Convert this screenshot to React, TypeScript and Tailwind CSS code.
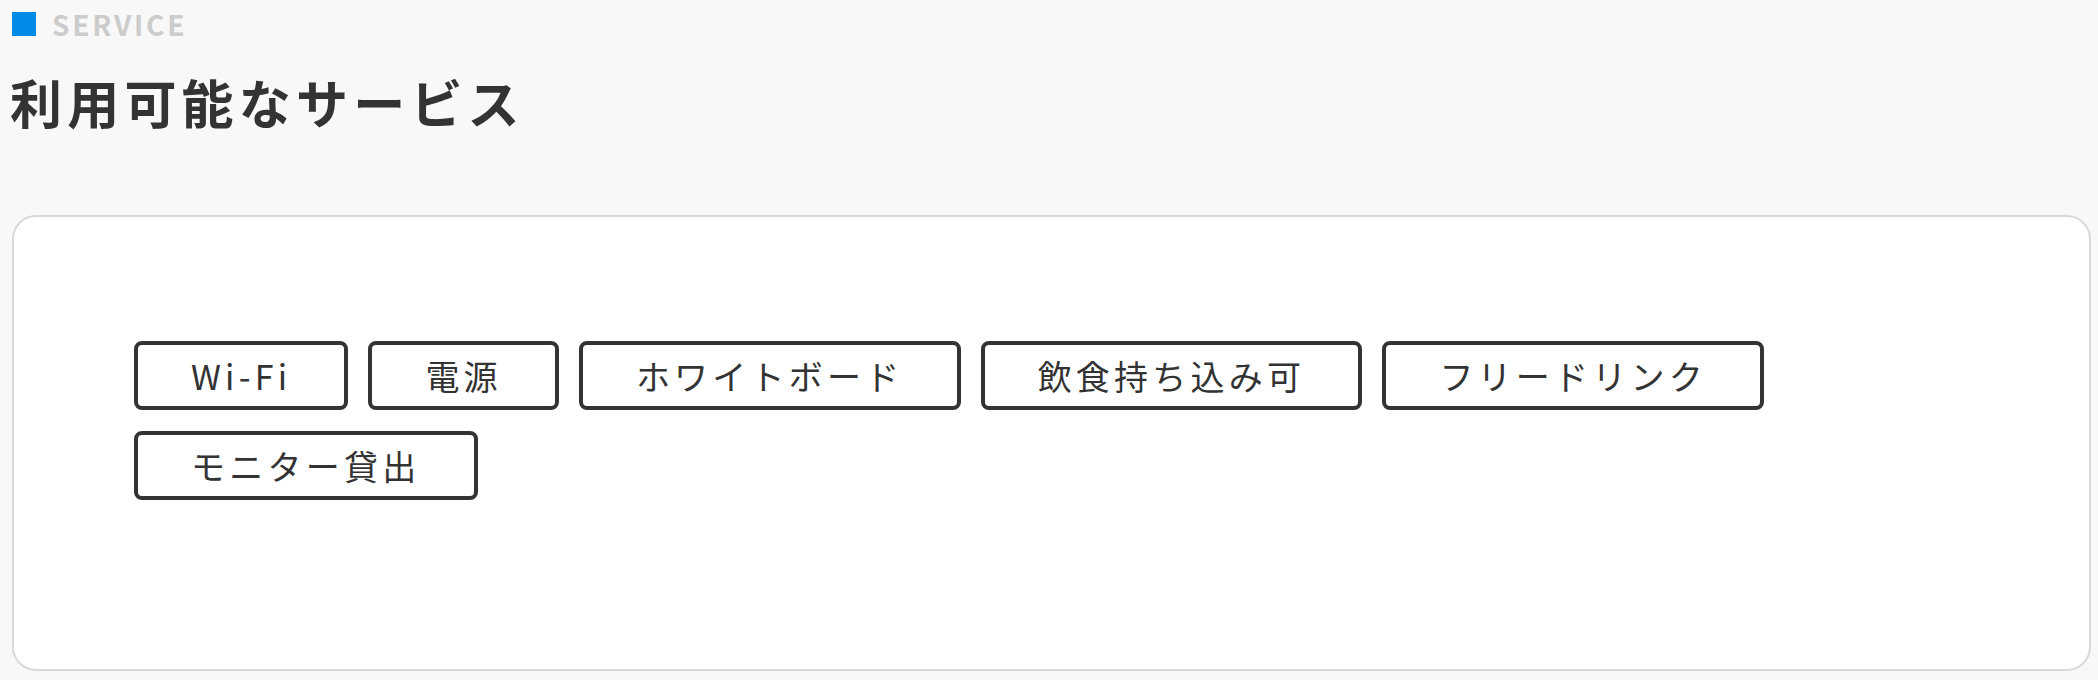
import React from "react";

const SERVICES = [
  "Wi-Fi",
  "電源",
  "ホワイトボード",
  "飲食持ち込み可",
  "フリードリンク",
  "モニター貸出",
];

export default function App() {
  return (
    <div
      className="min-h-screen bg-[#f8f8f8] pl-[12px] pr-[7px] pt-[12px] text-[#333]"
      style={{ fontFamily: '"Noto Sans CJK JP", "Noto Sans", sans-serif' }}
    >
      {/* Section label */}
      <div className="flex items-center gap-[16px]">
        <span className="block h-[24px] w-[24px] bg-[#008be8]" />
        <span className="text-[28px] font-bold leading-[24px] tracking-[0.1em] text-[#cccccc]">
          SERVICE
        </span>
      </div>

      <h2 className="-ml-[2px] mt-[36px] text-[52px] font-bold leading-[60px] tracking-[0.1em]">
        利用可能なサービス
      </h2>

      {/* Card */}
      <div className="mt-[83px] rounded-[24px] border-2 border-[#d9d9d9] bg-white pb-[169px] pl-[120px] pr-[120px] pt-[124px]">
        <ul className="flex flex-wrap gap-x-[20px] gap-y-[21px]">
          {SERVICES.map((s) => (
            <li
              key={s}
              className="rounded-[8px] border-[4px] border-[#333] px-[53px] py-[5px] text-[34px] font-normal leading-[51px] tracking-[0.125em]"
            >
              {s}
            </li>
          ))}
        </ul>
      </div>
    </div>
  );
}
